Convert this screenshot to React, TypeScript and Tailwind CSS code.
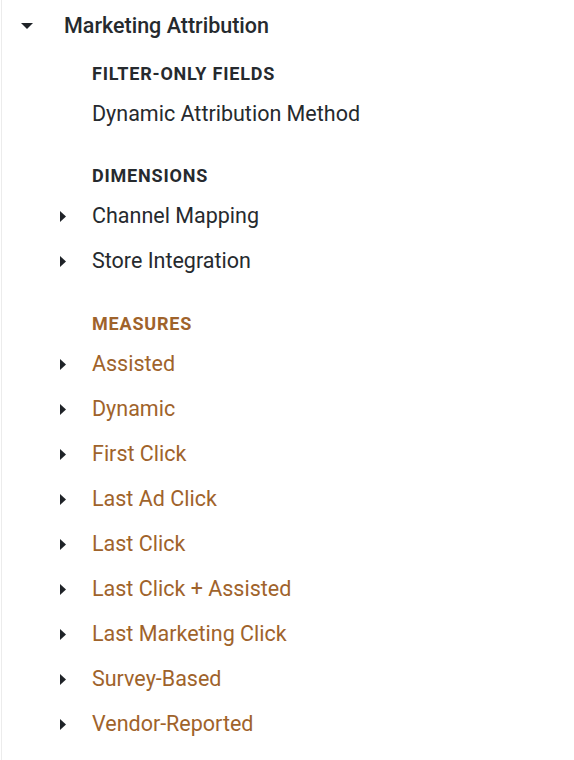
import React from "react";

const Caret = ({ down }: { down?: boolean }) =>
  down ? (
    <svg width="12" height="6" viewBox="0 0 12 6" className="block">
      <path d="M0 0 L12 0 L6 6 Z" fill="#1f2328" />
    </svg>
  ) : (
    <svg width="6" height="11" viewBox="0 0 6 11" className="block">
      <path d="M0 0 L6 5.5 L0 11 Z" fill="#1f2328" />
    </svg>
  );

const Item = ({ label, caret, orange }: { label: string; caret?: boolean; orange?: boolean }) => (
  <div className="flex h-[45px] items-center">
    <div className="flex w-[90px] shrink-0 justify-end pr-[26px]">{caret && <Caret />}</div>
    <span className={`text-[21.5px] ${orange ? "text-[#9f632b]" : "text-[#262a2e]"}`}>{label}</span>
  </div>
);

const Header = ({ label, orange }: { label: string; orange?: boolean }) => (
  <div className="flex h-[36px] items-center pb-[2px] pl-[90px]">
    <span
      className={`text-[18px] font-bold uppercase tracking-[0.8px] ${orange ? "text-[#9f632b]" : "text-[#262a2e]"}`}
    >
      {label}
    </span>
  </div>
);

export default function App() {
  const measures = [
    "Assisted",
    "Dynamic",
    "First Click",
    "Last Ad Click",
    "Last Click",
    "Last Click + Assisted",
    "Last Marketing Click",
    "Survey-Based",
    "Vendor-Reported",
  ];
  return (
    <div className="w-[574px] bg-white pl-[1px]">
      <div
        className="min-h-[760px] border-l border-[#ececec] bg-white pt-[1px]"
        style={{ fontFamily: "Roboto, 'Noto Sans', sans-serif" }}
      >
        <div className="flex h-[50px] items-center">
          <div className="flex w-[62px] shrink-0 pl-[19px]">
            <Caret down />
          </div>
          <span className="text-[21.5px] font-medium text-[#262a2e]">Marketing Attribution</span>
        </div>
        <div className="mt-[5px]">
          <Header label="Filter-only fields" />
          <Item label="Dynamic Attribution Method" />
        </div>
        <div className="mt-[21px]">
          <Header label="Dimensions" />
          <Item label="Channel Mapping" caret />
          <Item label="Store Integration" caret />
        </div>
        <div className="mt-[22px]">
          <Header label="Measures" orange />
          {measures.map((m) => (
            <Item key={m} label={m} caret orange />
          ))}
        </div>
      </div>
    </div>
  );
}
